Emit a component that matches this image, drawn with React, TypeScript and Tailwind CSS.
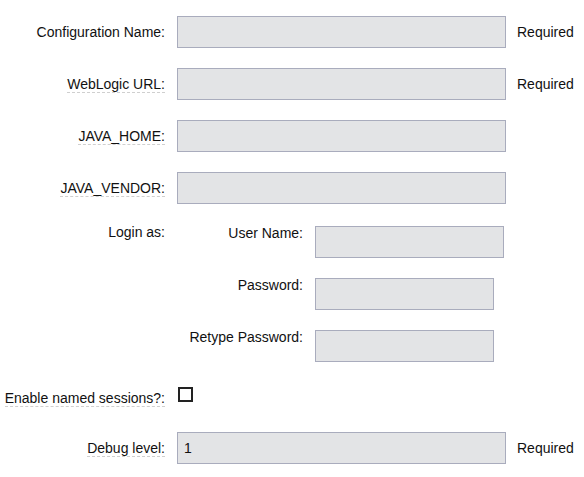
import React from "react";

const font = { fontFamily: '"Liberation Sans", Arial, Helvetica, sans-serif' };

function Label({ text, dashed }: { text: string; dashed?: boolean }) {
  return (
    <div className="w-[165px] shrink-0 text-right">
      {dashed ? (
        <span className="border-b border-dashed border-[#cfcfcf]">{text}</span>
      ) : (
        <span>{text}</span>
      )}
    </div>
  );
}

function Input({ w, value }: { w: string; value?: string }) {
  return (
    <div
      className={`${w} h-8 shrink-0 border border-[#a9acbd] bg-[#e3e4e6] pl-[6px] flex items-center`}
    >
      {value}
    </div>
  );
}

function Row({
  label,
  dashed,
  required,
  value,
}: {
  label: string;
  dashed?: boolean;
  required?: boolean;
  value?: string;
}) {
  return (
    <div className="flex items-center h-8">
      <Label text={label} dashed={dashed} />
      <div className="ml-3">
        <Input w="w-[329px]" value={value} />
      </div>
      {required && <div className="ml-[11px]">Required</div>}
    </div>
  );
}

function SubRow({ label, w }: { label: string; w: string }) {
  return (
    <div className="flex items-start">
      <div className="w-[126px] shrink-0 text-right leading-[14px]">{label}</div>
      <div className="ml-3">
        <Input w={w} />
      </div>
    </div>
  );
}

export default function App() {
  return (
    <div
      className="w-[584px] h-[477px] bg-white text-[14px] text-[#111] pt-4 flex flex-col gap-5 leading-4"
      style={font}
    >
      <Row label="Configuration Name:" required />
      <Row label="WebLogic URL:" dashed required />
      <Row label="JAVA_HOME:" dashed />
      <Row label="JAVA_VENDOR:" dashed />
      <div className="flex items-start">
        <div className="w-[165px] shrink-0 text-right leading-4">Login as:</div>
        <div className="ml-3 pt-[2px] flex flex-col gap-5">
          <SubRow label="User Name:" w="w-[189px]" />
          <SubRow label="Password:" w="w-[179px]" />
          <SubRow label="Retype Password:" w="w-[179px]" />
        </div>
      </div>
      <div className="flex items-start h-[30px] pt-[8px]">
        <Label text="Enable named sessions?:" dashed />
        <div className="ml-[13px] -mt-[3px] w-[15px] h-[15px] border-2 border-[#222] bg-white" />
      </div>
      <Row label="Debug level:" dashed required value="1" />
    </div>
  );
}
